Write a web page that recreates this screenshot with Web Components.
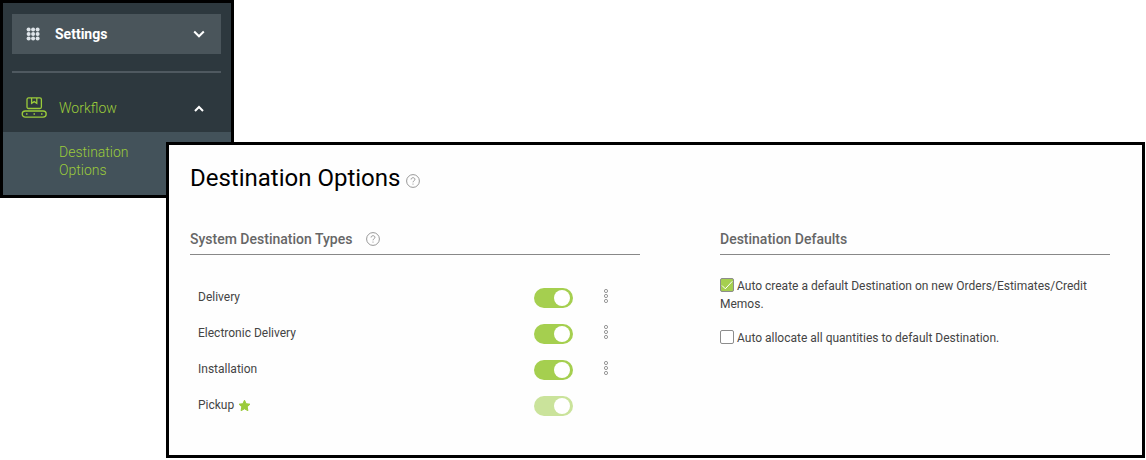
<!DOCTYPE html>
<html lang="en">
<head>
<meta charset="utf-8">
<meta name="viewport" content="width=device-width, initial-scale=1">
<title>Destination Options</title>
<style>
body {
  margin: 0;
  background: #fff;
  font-family: Roboto, "Liberation Sans", sans-serif;
  font-size: 12px;
  line-height: 18px;
  color: #444;
  --green: #9bcb3b;
  --toggle: #a5cf4f;
}
</style>
</head>
<body>

<settings-page>
  <side-nav slot="nav" heading="Settings">
    <nav-group label="Workflow">
      <a href="#destination-options">Destination Options</a>
    </nav-group>
  </side-nav>

  <options-panel heading="Destination Options">
    <option-section heading="System Destination Types" help>
      <destination-list>
        <destination-row name="Delivery" menu></destination-row>
        <destination-row name="Electronic Delivery" menu></destination-row>
        <destination-row name="Installation" menu></destination-row>
        <destination-row name="Pickup" default></destination-row>
      </destination-list>
    </option-section>
    <option-section heading="Destination Defaults">
      <check-option checked>Auto create a default Destination on new Orders/Estimates/Credit Memos.</check-option>
      <check-option>Auto allocate all quantities to default Destination.</check-option>
    </option-section>
  </options-panel>
</settings-page>

<script>
function render(el, html) {
  const root = el.attachShadow({mode: 'open'});
  root.innerHTML = html;
  return root;
}

customElements.define('settings-page', class extends HTMLElement {
  connectedCallback() {
    render(this, `
      <style>
        :host { display: block; }
        aside { box-sizing: border-box; width: 234px; }
        /* the panel lies over the lower corner of the navigation */
        main { position: relative; margin: -56px 1px 0 166px; }
      </style>
      <aside><slot name="nav"></slot></aside>
      <main><slot></slot></main>
    `);
  }
});

customElements.define('side-nav', class extends HTMLElement {
  connectedCallback() {
    render(this, `
      <style>
        :host { display: block; border: 3px solid #000; background: #2d383e; }
        .top { padding: 11px 10px 0 9px; }
        button {
          display: flex;
          align-items: center;
          gap: 14px;
          width: 100%;
          height: 40px;
          padding: 0 16px 0 14px;
          border: 0;
          background: #4a555b;
          color: #fff;
          font: 700 14px/20px Roboto, "Liberation Sans", sans-serif;
          text-align: left;
        }
        span { flex: 1; }
        hr { height: 2px; margin: 17px 0 11px; border: 0; background: #4f5960; }
        svg { display: block; }
      </style>
      <div class="top">
        <button type="button" aria-haspopup="true">
          <svg width="15" height="15" viewBox="0 0 15 15" fill="#dfe5ea">
            <circle cx="2.6" cy="2.4" r="2"/><circle cx="7.1" cy="2.4" r="2"/><circle cx="11.600" cy="2.4" r="2"/>
            <circle cx="2.6" cy="7" r="2"/><circle cx="7.1" cy="7" r="2"/><circle cx="11.600" cy="7" r="2"/>
            <circle cx="2.6" cy="11.600" r="2"/><circle cx="7.1" cy="11.600" r="2"/><circle cx="11.600" cy="11.600" r="2"/>
          </svg>
          <span>${this.getAttribute('heading')}</span>
          <svg width="12" height="8" viewBox="0 0 12 8" fill="none" stroke="#fff" stroke-width="2"><path d="M1.2 1.5 6 6.3l4.8-4.8"/></svg>
        </button>
        <hr>
      </div>
      <slot></slot>
    `);
  }
});

customElements.define('nav-group', class extends HTMLElement {
  connectedCallback() {
    render(this, `
      <style>
        :host { display: block; color: var(--green); font-size: 14px; font-weight: 300; }
        button {
          display: flex;
          align-items: center;
          gap: 12px;
          width: 100%;
          height: 48px;
          padding: 0 27px 0 18px;
          border: 0;
          background: none;
          color: inherit;
          font: 300 14px/20px Roboto, "Liberation Sans", sans-serif;
          text-align: left;
        }
        span { flex: 1; }
        svg { display: block; }
        .items { padding: 11px 88px 16px 56px; background: #43525a; }
        ::slotted(a) { display: block; color: inherit; text-decoration: none; }
      </style>
      <button type="button" aria-expanded="true">
        <svg width="26" height="22" viewBox="0 0 26 22" fill="none" stroke="currentColor" stroke-width="1.3">
          <rect x="6" y=".9" width="14.400" height="10.600" rx="1.500"/>
          <path d="M10.600.9v5.400l2.600-1.700 2.600 1.700V.9"/>
          <rect x="1.200" y="14" width="24" height="6.200" rx="3.100"/>
          <path d="M5 17h1.500m6 0H14m6 0h1.500"/>
        </svg>
        <span>${this.getAttribute('label')}</span>
        <svg width="10" height="7" viewBox="0 0 10 7" fill="none" stroke="#fff" stroke-width="2"><path d="M1 6 5 2l4 4"/></svg>
      </button>
      <div class="items"><slot></slot></div>
    `);
  }
});

customElements.define('help-tip', class extends HTMLElement {
  connectedCallback() {
    render(this, `
      <style>
        :host { display: block; }
        button { display: block; padding: 0; border: 0; background: none; color: #8c8c8c; }
        svg { display: block; }
      </style>
      <button type="button" aria-label="Help">
        <svg width="14" height="14" viewBox="0 0 14 14" fill="none" stroke="currentColor">
          <circle cx="7" cy="7" r="6.4" stroke-width=".9"/>
          <path d="M5.1 5.5c0-2.4 3.8-2.4 3.8-.1C8.900 6.900 7 6.700 7 8.300" stroke-width=".9"/>
          <circle cx="7" cy="10" r=".6" fill="currentColor" stroke="none"/>
        </svg>
      </button>
    `);
  }
});

customElements.define('options-panel', class extends HTMLElement {
  connectedCallback() {
    render(this, `
      <style>
        :host { display: block; padding: 17px 32px 32px 21px; border: 3px solid #000; background: #fefefe; }
        header { display: flex; align-items: center; gap: 6px; margin-bottom: 35px; }
        h1 { margin: 0; color: #000; font-size: 24px; font-weight: 400; line-height: 32px; }
        help-tip { padding-top: 6px; }
        .columns { display: grid; grid-template-columns: 450fr 390fr; gap: 80px; align-items: start; }
      </style>
      <header><h1>${this.getAttribute('heading')}</h1><help-tip></help-tip></header>
      <div class="columns"><slot></slot></div>
    `);
  }
});

customElements.define('option-section', class extends HTMLElement {
  connectedCallback() {
    render(this, `
      <style>
        :host { display: block; }
        header {
          display: flex;
          align-items: center;
          gap: 14px;
          margin-bottom: 22px;
          padding-bottom: 5px;
          border-bottom: 1px solid #888;
        }
        h2 { margin: 0; color: #666; font-size: 14px; font-weight: 500; line-height: 20px; }
      </style>
      <header>
        <h2>${this.getAttribute('heading')}</h2>
        ${this.hasAttribute('help') ? '<help-tip></help-tip>' : ''}
      </header>
      <slot></slot>
    `);
  }
});

customElements.define('destination-list', class extends HTMLElement {
  connectedCallback() {
    render(this, `
      <style>
        :host { display: grid; grid-auto-rows: 36px; padding-top: 2px; }
      </style>
      <slot></slot>
    `);
  }
});

customElements.define('destination-row', class extends HTMLElement {
  connectedCallback() {
    const isDefault = this.hasAttribute('default');
    render(this, `
      <style>
        :host {
          display: grid;
          grid-template-columns: 1fr 39px 24px;
          column-gap: 21px;
          align-items: center;
          padding: 0 22px 0 8px;
        }
        label { display: flex; align-items: center; gap: 4px; }
        input {
          appearance: none;
          display: flex;
          align-items: center;
          justify-content: flex-end;
          box-sizing: border-box;
          width: 39px;
          height: 20px;
          margin: 2px 0 0;
          padding: 0 3px;
          border-radius: 10px;
          background: var(--toggle);
        }
        input::before { content: ""; width: 16px; height: 16px; border-radius: 50%; background: #fff; }
        input:not(:checked) { justify-content: flex-start; background: #bbb; }
        input:disabled { background: #cae39b; }
        button { height: 20px; margin: 0 0 2px; padding: 0; border: 0; background: none; }
        svg { display: block; }
        button svg { margin: 0 auto; }
      </style>
      <label for="toggle">${this.getAttribute('name')}
        ${isDefault ? `<svg width="13" height="13" viewBox="0 0 13 13" fill="#9bcb3b" stroke="#9bcb3b" stroke-linejoin="round">
          <path d="m6.500 1.200 1.600 3.500 3.900.5-2.800 2.600.7 3.900-3.400-1.900-3.400 1.900.7-3.900L1 5.200l3.900-.5z"/></svg>` : ''}
      </label>
      <input id="toggle" type="checkbox" role="switch" checked ${isDefault ? 'disabled' : ''}>
      ${this.hasAttribute('menu') ? `<button type="button" aria-label="More actions">
        <svg width="6" height="16" viewBox="0 0 6 16" fill="none" stroke="#999">
          <circle cx="3" cy="3" r="1.600"/><circle cx="3" cy="8" r="1.600"/><circle cx="3" cy="13" r="1.600"/>
        </svg>
      </button>` : ''}
    `);
  }
});

customElements.define('check-option', class extends HTMLElement {
  connectedCallback() {
    render(this, `
      <style>
        :host { display: block; margin-bottom: 16px; }
        input {
          appearance: none;
          box-sizing: border-box;
          width: 14px;
          height: 14px;
          margin: 0 3px 0 0;
          border: 1px solid #8c8c8c;
          border-radius: 2px;
          background: #fff;
          vertical-align: -2px;
        }
        input:checked {
          background: var(--toggle) url('data:image/svg+xml,<svg xmlns="http://www.w3.org/2000/svg" viewBox="0 0 12 12" fill="none" stroke="white"><path d="M1 6.500 4.300 9.800 11.300 2.300"/></svg>') center / 12px no-repeat;
        }
      </style>
      <label><input type="checkbox" ${this.hasAttribute('checked') ? 'checked' : ''}><slot></slot></label>
    `);
  }
});
</script>
</body>
</html>
